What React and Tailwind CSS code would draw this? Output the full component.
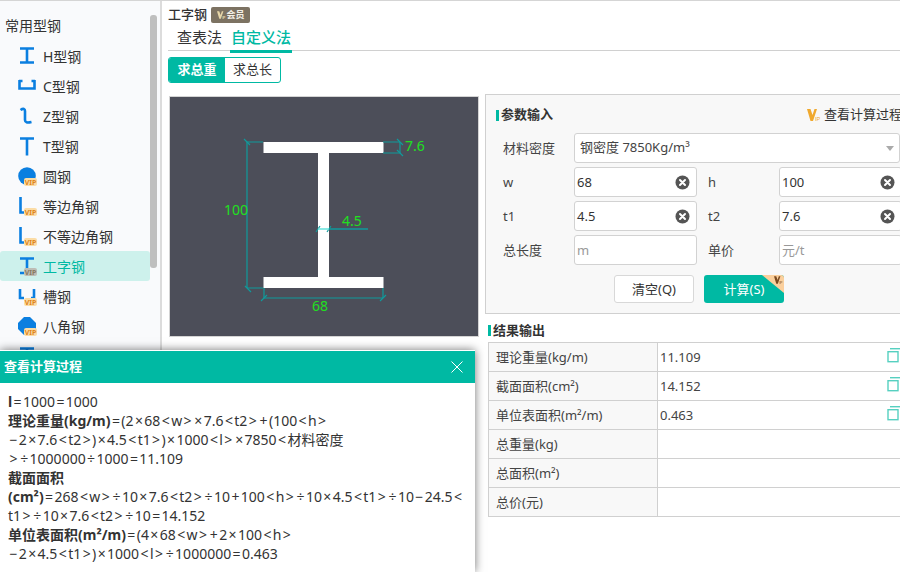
import React from 'react';

const font = '[font-family:"Noto_Sans","Noto_Sans_CJK_SC",sans-serif]';
const BLUE = '#0b7fe0';

const VipTag = ({ muted }) => (
  <span className={`absolute left-[6px] top-[11px] flex h-[8px] w-[13px] items-center justify-center rounded-[2px] text-[7px] font-bold leading-none ${muted ? 'bg-[#bdbdb5] text-[#8a7a60]' : 'bg-[#fbdca6] text-[#e0851a]'}`}>
    VIP
  </span>
);

const shapes = {
  h: <path d="M2 1.5h14M2 15.5h14M9 1.5v14" strokeWidth="2.6" fill="none" />,
  c: <path d="M1.5 3v8.5h15V3M1 4h3.5M17 4h-3.5" strokeWidth="2.6" fill="none" />,
  z: <path d="M2.5 3c3-2 4.5-1 4.5 1v9c0 2.5 2 3 6.5 2" strokeWidth="2.6" fill="none" />,
  t: <path d="M2 1.5h14M9 1.5v17" strokeWidth="2.6" fill="none" />,
  round: <circle cx="9" cy="9" r="8.8" stroke="none" fill={BLUE} />,
  l: <path d="M2.5 0v15.5H7" strokeWidth="2.6" fill="none" />,
  i: <path d="M2 1.5h14M9 1.5v13M2 16h4" strokeWidth="2.6" fill="none" />,
  u: <path d="M2 2v9h4M16 2v9h-3" strokeWidth="2.6" fill="none" />,
  oct: <path d="M6 0h6l6 6v6l-6 6H6l-6-6V6z" stroke="none" fill={BLUE} />,
};

const items = [
  ['H型钢', 'h'],
  ['C型钢', 'c'],
  ['Z型钢', 'z'],
  ['T型钢', 't'],
  ['圆钢', 'round', true],
  ['等边角钢', 'l', true],
  ['不等边角钢', 'l', true],
  ['工字钢', 'i', true, true],
  ['槽钢', 'u', true],
  ['八角钢', 'oct', true],
  ['', 'h'], // mostly under the dialog, only the icon top shows
];

const SideItem = ({ label, shape, vip, active }) => (
  <div className={`flex h-[30px] items-center rounded-[3px] pl-[18px] text-[14px] ${active ? 'bg-[#cdf1ec] text-[#00b9a3]' : 'text-[#333]'}`}>
    <span className="relative mr-[7px] h-[18px] w-[18px]">
      <svg width="18" height="20" viewBox="0 0 18 20" stroke={BLUE}>{shapes[shape]}</svg>
      {vip && <VipTag muted={active} />}
    </span>
    {label}
  </div>
);

const Sidebar = () => (
  <aside className="flex h-full w-[160px] shrink-0 bg-[#f9fafc]">
    <div className="w-[150px]">
      <div className="flex h-[40px] items-end pb-[5px] pl-[5px] text-[14px] text-[#333]">常用型钢</div>
      {items.map(([label, shape, vip, active]) => (
        <SideItem key={label || 'more'} label={label} shape={shape} vip={vip} active={active} />
      ))}
    </div>
    <div className="pt-[14px]">
      <div className="h-[253px] w-[7px] rounded-[3px] bg-[#bfbfbf]" />
    </div>
  </aside>
);

const VipMark = ({ c1 = '#f0a92e', c2 = '#f0a92e', w = 14, h = 12 }) => (
  <svg width={w} height={h} viewBox="0 0 14 12">
    <path d="M0 0h3.5l2 6L7.5 0h2.5L6 12H3.5z" fill={c1} />
    <text x="8" y="11.5" fontSize="5.5" fill={c2} fontFamily="'Liberation Sans', sans-serif">IP</text>
  </svg>
);

const Drawing = () => (
  <div className="h-[241px] w-[310px] border border-[#d4d4d4] bg-[#4c4e59]">
    <svg width="308" height="239" viewBox="170 97 308 239">
      <rect x="263.5" y="142" width="120" height="11" fill="#fff" />
      <rect x="318" y="153" width="11" height="124" fill="#fff" />
      <rect x="263.5" y="277" width="120" height="11" fill="#fff" />
      <g stroke="#0f9a9c" strokeWidth="1.2" fill="none">
        <path d="M247 142v146M247 142h16M247 288h16" />
        <path d="M244 139l6 6M245 286l6 6" />
        <path d="M264 288v10M383 288v10M264 298h119" />
        <path d="M261 301l6-6M380 301l6-6" />
        <path d="M383 142h17M383 153h17M400 142v11" />
        <path d="M397 139l6 6M397 150l6 6" />
        <path d="M329 229h39" strokeWidth="1.6" />
        <path d="M316 232l4-6M327 232l4-6" />
      </g>
      <path d="M318 229h11" stroke="#6fe6e0" strokeWidth="1.6" />
      <g fill="#1fe01f" fontSize="14" fontFamily="'Noto Sans', sans-serif">
        <text x="405" y="151">7.6</text>
        <text x="224" y="215">100</text>
        <text x="342" y="226">4.5</text>
        <text x="312" y="311">68</text>
      </g>
    </svg>
  </div>
);

const ClearIcon = () => (
  <svg width="15" height="15" viewBox="0 0 15 15" className="shrink-0">
    <circle cx="7.5" cy="7.5" r="7" fill="#555" />
    <path d="M5 5l5 5M10 5l-5 5" stroke="#fff" strokeWidth="2" strokeLinecap="round" />
  </svg>
);

const Field = ({ value, placeholder }) => (
  <div className="flex h-[30px] w-[123px] shrink-0 items-center justify-between rounded-[3px] border border-[#d2d2d2] bg-white pl-[2px] pr-[6px] text-[13px]">
    {value ? <span className="pt-[2px] text-[#333]">{value}</span> : <span className="pt-[2px] text-[#999]">{placeholder}</span>}
    {value && <ClearIcon />}
  </div>
);

const FormRow = ({ a, b }) => (
  <div className="flex h-[30px] items-center text-[13px] text-[#444]">
    <span className="w-[71px] shrink-0 pt-[1px]">{a.label}</span>
    <Field value={a.value} placeholder={a.placeholder} />
    <span className="ml-[11px] w-[71px] shrink-0 pt-[1px]">{b.label}</span>
    <Field value={b.value} placeholder={b.placeholder} />
  </div>
);

const ParamPanel = () => (
  <section className="h-[220px] w-[440px] shrink-0 border border-[#d0d0d0] bg-[#f8f8f8] pl-[10px] pt-[8px]">
    <div className="flex h-[24px] w-[406px] items-center justify-between whitespace-nowrap text-[13px]">
      <div className="flex items-center font-bold text-[#333]">
        <span className="mr-[2px] h-[11px] w-[3px] bg-[#00b9a3]" />
        参数输入
      </div>
      <div className="flex items-center gap-[3px] text-[#333]">
        <VipMark />
        <span>查看计算过程</span>
      </div>
    </div>
    <div className="ml-[7px] mt-[6px] flex flex-col gap-[4px]">
      <div className="flex h-[30px] items-center text-[13px] text-[#444]">
        <span className="w-[71px] shrink-0 pt-[1px]">材料密度</span>
        <div className="flex h-[30px] w-[326px] items-center justify-between rounded-[3px] border border-[#d2d2d2] bg-white pl-[5px] pr-[5px] text-[#444]">
          <span>钢密度 7850Kg/m³</span>
          <span className="h-0 w-0 border-x-[4px] border-t-[5px] border-x-transparent border-t-[#aaa]" />
        </div>
      </div>
      <FormRow a={{ label: 'w', value: '68' }} b={{ label: 'h', value: '100' }} />
      <FormRow a={{ label: 't1', value: '4.5' }} b={{ label: 't2', value: '7.6' }} />
      <FormRow a={{ label: '总长度', placeholder: 'm' }} b={{ label: '单价', placeholder: '元/t' }} />
    </div>
    <div className="ml-[118px] mt-[10px] flex gap-[10px] text-[13px]">
      <button className="h-[28px] w-[80px] rounded-[3px] border border-[#d8d8d8] bg-white pt-[1px] text-[#333]">清空(Q)</button>
      <button className="relative h-[28px] w-[80px] overflow-hidden rounded-[3px] bg-[#00b9a3] pt-[1px] text-white">
        计算(S)
        <span className="absolute right-0 top-0 h-0 w-0 border-l-[22px] border-t-[18px] border-l-transparent border-t-[#fbcf9c]" />
        <span className="absolute right-[1px] top-[1px] flex">
          <VipMark c1="#7a4a20" c2="#7a4a20" w={9} h={8} />
        </span>
      </button>
    </div>
  </section>
);

const results = [
  ['理论重量(kg/m)', '11.109'],
  ['截面面积(cm²)', '14.152'],
  ['单位表面积(m²/m)', '0.463'],
  ['总重量(kg)', ''],
  ['总面积(m²)', ''],
  ['总价(元)', ''],
];

const CopyIcon = () => (
  <svg width="13" height="15" viewBox="0 0 13 15" fill="none" stroke="#56d0c0" strokeWidth="1.4" className="mb-[3px] shrink-0">
    <path d="M3 .7h10" />
    <rect x="1" y="3.7" width="10" height="10" />
  </svg>
);

const ResultTable = () => (
  <section className="pl-[3px]">
    <div className="flex h-[28px] items-end pb-[2px] text-[13px] font-bold text-[#333]">
      <span className="mb-[4px] mr-[2px] h-[11px] w-[3px] bg-[#00b9a3]" />
      结果输出
    </div>
    <div className="w-[420px] border-l border-t border-[#d0d0d0]">
      {results.map(([label, value]) => (
        <div key={label} className="flex h-[29px] border-b border-[#d0d0d0] text-[13px] text-[#444]">
          <div className="flex w-[169px] shrink-0 items-center border-r border-[#d0d0d0] bg-[#f8f8f8] pl-[7px] pt-[1px]">{label}</div>
          <div className="flex flex-1 items-center justify-between pl-[2px] pr-[8px]">
            <span className="pt-[2px] text-[13px]">{value}</span>
            {value && <CopyIcon />}
          </div>
        </div>
      ))}
    </div>
  </section>
);

const Main = () => (
  <main className="min-w-0 flex-1 border-l-2 border-[#dcdcdc] bg-white">
    <div className="w-[740px] pl-[6px] pt-[5px]">
      <div className="flex h-[18px] items-center gap-[4px] text-[13px] font-medium text-[#333]">
        工字钢
        <span className="flex h-[16px] w-[39px] items-center justify-center gap-[1px] rounded-[2px] bg-[#7c7262] text-[9px] font-bold text-[#f3efe6]">
          <VipMark c1="#e6d6a8" c2="#e6d6a8" w={9} h={8} />
          会员
        </span>
      </div>
      <div className="flex h-[27px] items-center border-b border-[#d0d0d0] pl-[9px] text-[15px] text-[#333]">
        <span>查表法</span>
        <span className="relative ml-[9px] font-medium text-[#00b9a3]">
          自定义法
          <span className="absolute -bottom-[5px] -left-[1px] -right-[1px] h-[3px] bg-[#00b9a3]" />
        </span>
      </div>
      <div className="mt-[6px] flex h-[26px] w-[113px] overflow-hidden rounded-[3px] border border-[#00b9a3] text-[13px]">
        <span className="flex w-[56px] items-center justify-center bg-[#00b9a3] font-bold text-white">求总重</span>
        <span className="flex flex-1 items-center justify-center text-[#333]">求总长</span>
      </div>
      <div className="mt-[11px] flex items-start">
        <div className="ml-[1px] mr-[6px] mt-[2px]">
          <Drawing />
        </div>
        <div>
          <ParamPanel />
          <ResultTable />
        </div>
      </div>
    </div>
  </main>
);

const lines = [
  [['l', 1], ['=1000=1000']],
  [['理论重量(kg/m)', 1], ['=(2×68<w>×7.6<t2>+(100<h>']],
  [['−2×7.6<t2>)×4.5<t1>)×1000<l>×7850<材料密度']],
  [['>÷1000000÷1000=11.109']],
  [['截面面积', 1]],
  [['(cm²)', 1], ['=268<w>÷10×7.6<t2>÷10+100<h>÷10×4.5<t1>÷10−24.5<']],
  [['t1>÷10×7.6<t2>÷10=14.152']],
  [['单位表面积(m²/m)', 1], ['=(4×68<w>+2×100<h>']],
  [['−2×4.5<t1>)×1000<l>÷1000000=0.463']],
];

// math symbols sit wider in the reference font
const Formula = ({ text }) =>
  text.split(/([<>×÷=+−])/).map((part, i) =>
    i % 2 ? <span key={i} className="px-[1.4px]">{part}</span> : part
  );

const ProcessModal = () => (
  <div className="absolute bottom-0 left-0 top-[349px] w-[475px] border-t border-white bg-white shadow-[0_0_9px_rgba(0,0,0,0.55)]">
    <div className="flex h-[32px] items-center justify-between bg-[#00b9a3] pl-[4px] pr-[12px] text-[13px] font-bold text-white">
      查看计算过程
      <svg width="12" height="12" viewBox="0 0 12 12" stroke="#fff" strokeWidth="1">
        <path d="M.5.5l11 11M11.5.5l-11 11" />
      </svg>
    </div>
    <div className="pl-[8px] pt-[9px] text-[14px] leading-[19px] text-[#333]">
      {lines.map((parts, i) => (
        <div key={i} className="whitespace-nowrap">
          {parts.map(([text, bold], j) => (
            <span key={j} className={bold ? 'font-bold' : ''}><Formula text={text} /></span>
          ))}
        </div>
      ))}
    </div>
  </div>
);

export default function App() {
  return (
    <div className={`relative flex h-[572px] w-[900px] overflow-hidden border-t border-[#d5d5d5] bg-white ${font}`}>
      <Sidebar />
      <Main />
      <ProcessModal />
    </div>
  );
}
